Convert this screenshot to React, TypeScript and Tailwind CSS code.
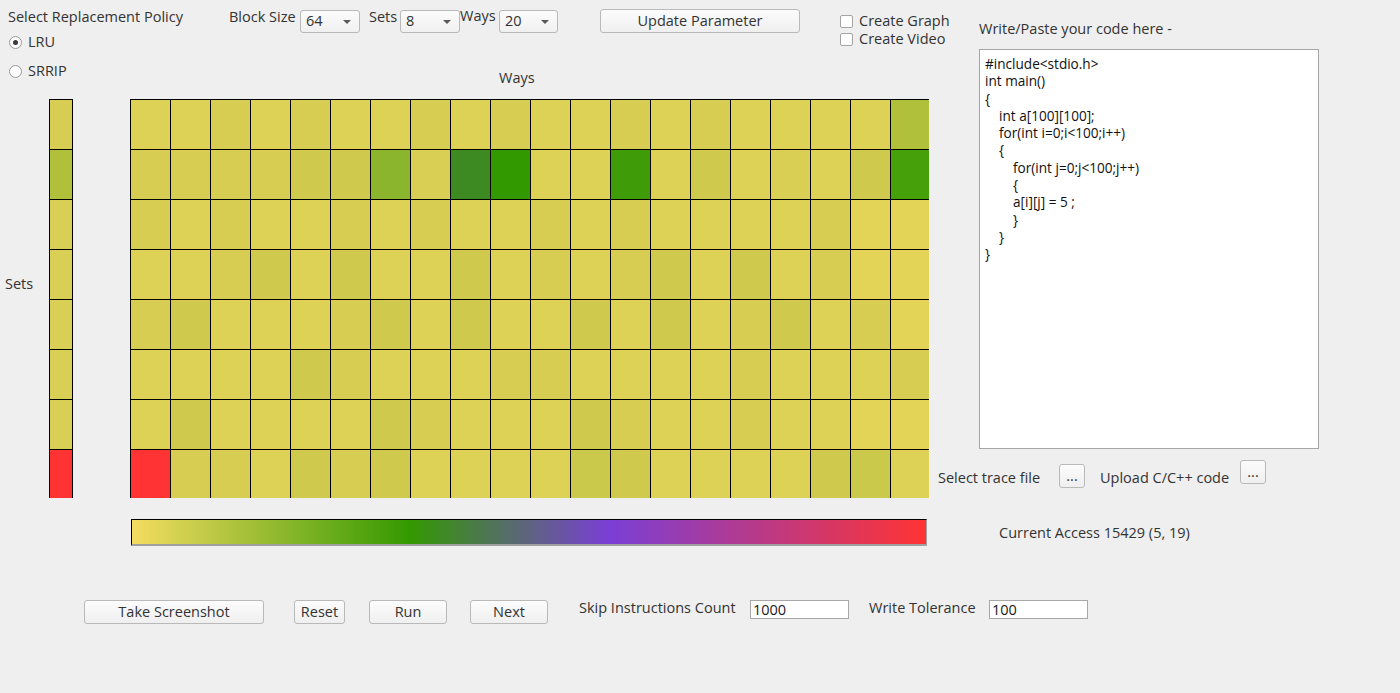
import React from "react";

// colour codes for the cache heat map
const PALETTE: Record<string, string> = {
  A: "#ded256",
  B: "#d6cd52",
  C: "#cfca4e",
  D: "#e3d357",
  E: "#cbc94b",
  M: "#d9cf55",
  R: "#ff3333",
  "1": "#b0c03b",
  "2": "#8ab52c",
  "3": "#3e8a22",
  "4": "#339900",
  "5": "#3f9c08",
  "6": "#46a00a",
};

const ROWS = [
  "AABABAABABAABABAAAA1",
  "BBBBCC2M34AA5ACAMAC6",
  "BABAABABAABABAAAABDD",
  "AABCACAACABABCACABDD",
  "BCAAABCACAACACABCABD",
  "AAAACBAAABBAAAABAAAB",
  "ACAAAACBAAACBAABAADD",
  "RBBACBCAAAAECAAAACEA",
];

const SET_COLUMN = "B1MMMMMR";

const CODE: [number, string][] = [
  [0, "#include<stdio.h>"],
  [0, "int main()"],
  [0, "{"],
  [1, "int a[100][100];"],
  [1, "for(int i=0;i<100;i++)"],
  [1, "{"],
  [2, "for(int j=0;j<100;j++)"],
  [2, "{"],
  [2, "a[i][j] = 5 ;"],
  [2, "}"],
  [1, "}"],
  [0, "}"],
];

const INDENT = ["pl-0", "pl-[14px]", "pl-[28px]"];

function Combo({ value, width }: { value: string; width: string }) {
  return (
    <div
      className={`${width} mt-[1px] flex h-[23px] shrink-0 items-center justify-between rounded-[3px] border border-[#b9b9b9] bg-gradient-to-b from-[#fcfcfc] to-[#f0f0f0] pl-[5px] pr-[8px]`}
    >
      <span className="leading-none">{value}</span>
      <span className="h-0 w-0 border-x-[4px] border-t-[4px] border-x-transparent border-t-[#5a5a5a]" />
    </div>
  );
}

function Button({
  label,
  className,
}: {
  label: string;
  className: string;
}) {
  return (
    <button
      className={`${className} flex shrink-0 items-center justify-center whitespace-nowrap rounded-[3px] border border-[#b9b9b9] bg-gradient-to-b from-[#fcfcfc] to-[#efefef] text-[#333]`}
    >
      {label}
    </button>
  );
}

function Radio({ label, checked }: { label: string; checked?: boolean }) {
  return (
    <div className="flex h-[20px] items-center">
      <span className="ml-[1px] flex h-[13px] w-[13px] items-center justify-center rounded-full border border-[#9a9a9a] bg-[#fdfdfd]">
        {checked && <span className="h-[5px] w-[5px] rounded-full bg-[#3a3a3a]" />}
      </span>
      <span className="ml-[6px]">{label}</span>
    </div>
  );
}

function Check({ label }: { label: string }) {
  return (
    <div className="flex h-[18px] items-center whitespace-nowrap">
      <span className="h-[13px] w-[13px] shrink-0 rounded-[2px] border border-[#a4a4a4] bg-white" />
      <span className="ml-[6px]">{label}</span>
    </div>
  );
}

function TextInput({ value }: { value: string }) {
  return (
    <div className="flex h-[19px] w-[99px] shrink-0 items-center border border-[#a8a8a8] bg-white pl-[2px] text-[#1a1a1a]">
      {value}
    </div>
  );
}

export default function App() {
  return (
    <div className="h-[693px] w-[1400px] overflow-hidden bg-[#efefef] font-['Open_Sans',sans-serif] text-[14.5px] leading-[20px] text-[#333]">
      <div className="flex">
        {/* left: controls, heat map, gradient */}
        <div className="w-[938px] shrink-0">
          <div className="flex h-[99px]">
            <div className="w-[229px] shrink-0 pl-[8px] pt-[7px] whitespace-nowrap">
              <div>Select Replacement Policy</div>
              <div className="mt-[5px]">
                <Radio label="LRU" checked />
              </div>
              <div className="mt-[9px]">
                <Radio label="SRRIP" />
              </div>
            </div>

            <div className="flex shrink-0 flex-col pt-[9px]">
              <div className="flex items-start whitespace-nowrap">
                <div className="mt-[-2px] w-[71px] shrink-0">Block Size</div>
                <Combo value="64" width="w-[60px]" />
                <div className="ml-[9px] mt-[-2px] w-[31px] shrink-0">Sets</div>
                <Combo value="8" width="w-[60px]" />
                <div className="mt-[-3px] w-[39px] shrink-0">Ways</div>
                <Combo value="20" width="w-[59px]" />
                <Button label="Update Parameter" className="ml-[42px] h-[24px] w-[200px]" />
                <div className="ml-[40px] mt-[3px] flex shrink-0 flex-col">
                  <Check label="Create Graph" />
                  <Check label="Create Video" />
                </div>
              </div>
              <div className="ml-[270px] mt-[20px]">Ways</div>
            </div>
          </div>

          <div className="flex h-[399px]">
            <div className="flex w-[49px] shrink-0 items-center pb-[29px] pl-[5px]">Sets</div>
            <div className="w-[24px] shrink-0 overflow-hidden border-x border-black">
              {SET_COLUMN.split("").map((c, i) => (
                <div
                  key={i}
                  className="h-[50px] border-t border-black"
                  style={{ backgroundColor: PALETTE[c] }}
                />
              ))}
            </div>
            <div className="ml-[57px] h-[399px] w-[799px] shrink-0 overflow-hidden">
              {ROWS.map((row, r) => (
                <div key={r} className="flex w-[800px]">
                  {row.split("").map((c, i) => (
                    <div
                      key={i}
                      className="h-[50px] w-[40px] shrink-0 border-l border-t border-black"
                      style={{ backgroundColor: PALETTE[c] }}
                    />
                  ))}
                </div>
              ))}
            </div>
          </div>

          <div className="ml-[131px] mt-[21px] h-[27px] w-[796px] border-b-2 border-l border-r border-t border-b-[#a0a0a0] border-l-black border-r-[#a0a0a0] border-t-black bg-[linear-gradient(to_right,#f5dc60_0%,#339900_35%,#7a3fd5_60%,#ff3333_100%)]" />
        </div>

        {/* right: code editor and file pickers */}
        <div className="flex-1 whitespace-nowrap">
          <div className="pl-[41px] pt-[19px]">Write/Paste your code here -</div>
          <div className="ml-[41px] mt-[10px] h-[400px] w-[340px] border border-[#a6a6a6] bg-white pl-[5px] pt-[5px] text-[13.6px] leading-[17.3px] text-[#111]">
            {CODE.map(([indent, line], i) => (
              <div key={i} className={`${INDENT[indent]} whitespace-pre`}>
                {line}
              </div>
            ))}
          </div>
          <div className="mt-[11px] flex items-start">
            <div className="mt-[8px] w-[121px] shrink-0">Select trace file</div>
            <Button label="..." className="mt-[4px] h-[24px] w-[26px] leading-[14px]" />
            <div className="ml-[15px] mt-[8px] w-[140px] shrink-0">Upload C/C++ code</div>
            <Button label="..." className="h-[24px] w-[26px] leading-[14px]" />
          </div>
          <div className="mt-[35px] pl-[61px]">Current Access 15429 (5, 19)</div>
        </div>
      </div>

      <div className="mt-[54px] flex items-start whitespace-nowrap pl-[84px]">
        <Button label="Take Screenshot" className="h-[24px] w-[180px]" />
        <Button label="Reset" className="ml-[30px] h-[24px] w-[51px]" />
        <Button label="Run" className="ml-[24px] h-[24px] w-[78px]" />
        <Button label="Next" className="ml-[23px] h-[24px] w-[78px]" />
        <div className="ml-[31px] mt-[-2px] w-[171px] shrink-0">Skip Instructions Count</div>
        <TextInput value="1000" />
        <div className="ml-[20px] mt-[-2px] w-[120px] shrink-0">Write Tolerance</div>
        <TextInput value="100" />
      </div>
    </div>
  );
}
